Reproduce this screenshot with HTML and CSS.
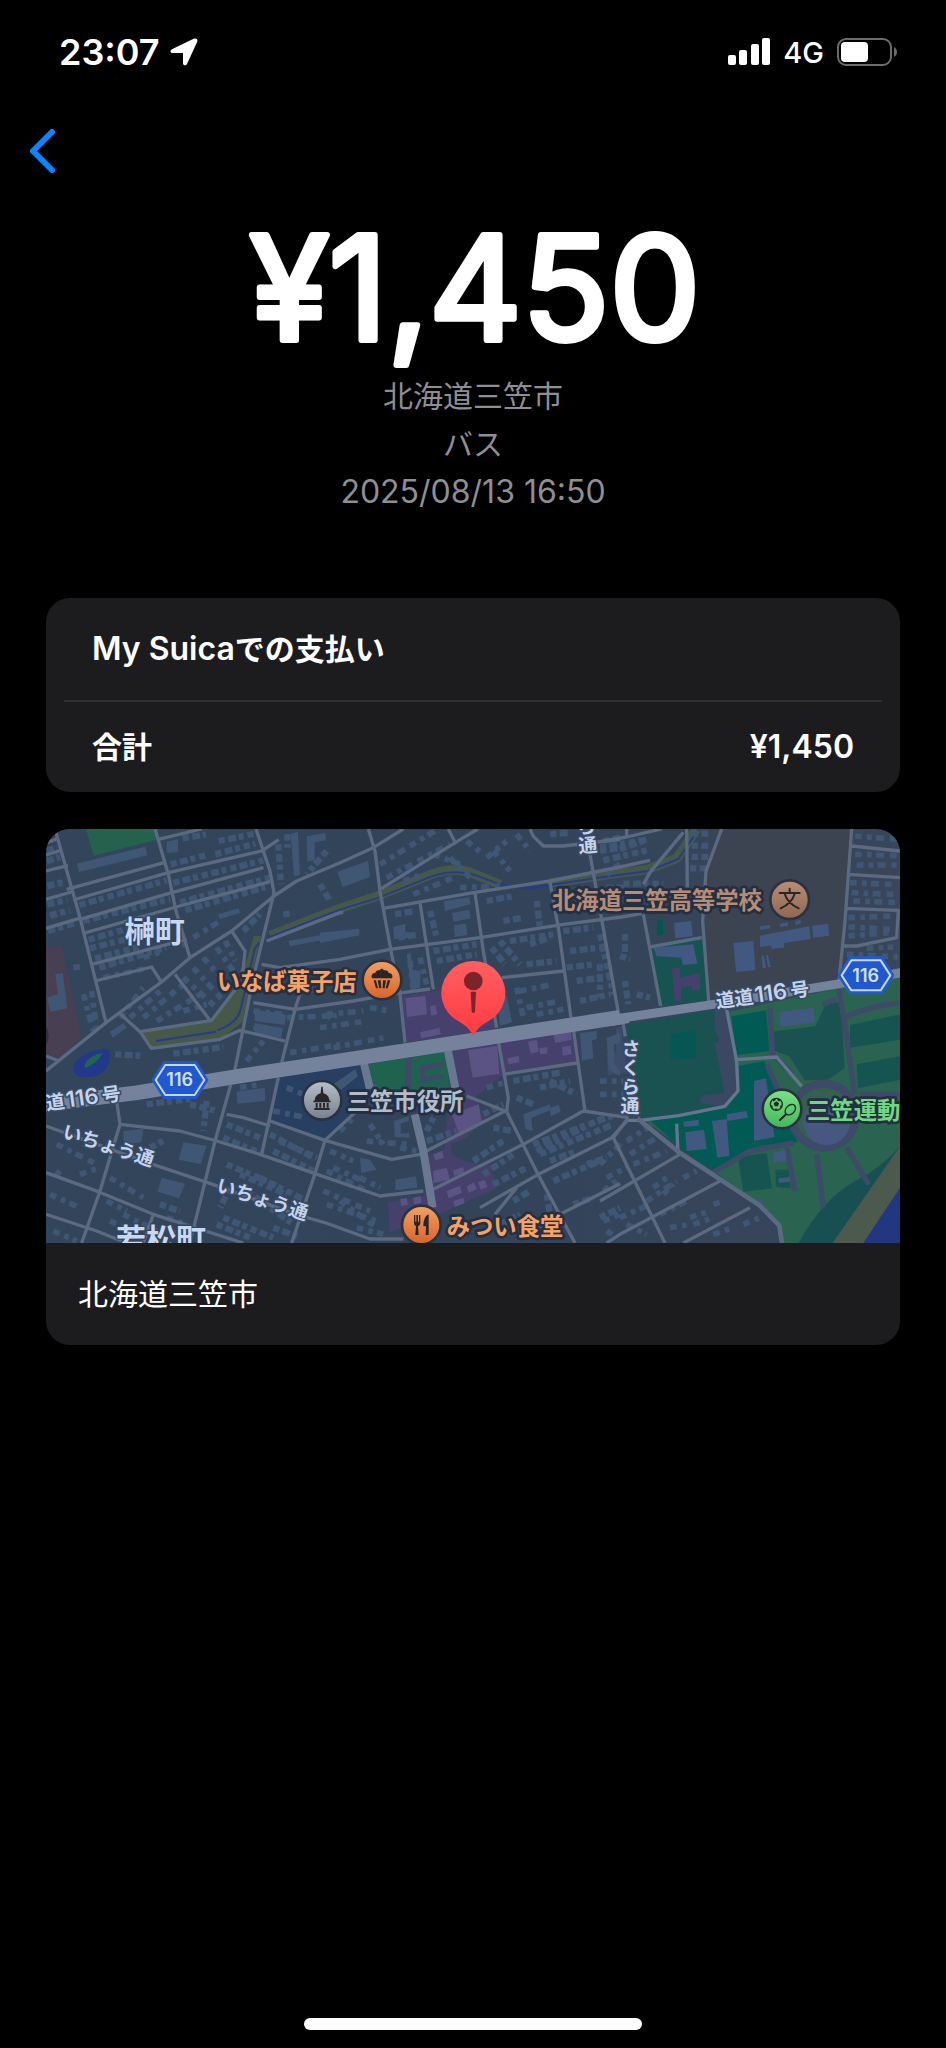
FILE: index.html
```html
<!DOCTYPE html>
<html lang="ja">
  <head>
    <meta charset="UTF-8">
    <meta name="viewport" content="width=device-width, initial-scale=1.0">
    <title>My Suica</title>
    <link rel="stylesheet" href="styles.css">
  </head>
  <body>
    <div class="screen">
        <header class="status-bar">
            <div class="status-left">
                <span class="clock">23:07</span>
                <svg class="icon-location" viewBox="0 0 28 28" aria-hidden="true">
                    <path d="M2 11.2 23.6.8c2.700-1.200 4.600.6 3.500 3.200L17 26c-.9 2.100-4 1.700-4-.8V15H2.900C.2 15-.3 12.300 2 11.200z"/>
                </svg>
            </div>
            <div class="status-right">
                <svg class="icon-signal" viewBox="0 0 42 28" aria-hidden="true">
                    <rect x="0" y="17" width="8" height="10" rx="2"/>
                    <rect x="11" y="12" width="8" height="15" rx="2"/>
                    <rect x="23" y="6" width="8" height="21" rx="2"/>
                    <rect x="34" y="0" width="8" height="27" rx="2"/>
                </svg>
                <span class="network">4G</span>
                <svg class="icon-battery" viewBox="0 0 60 28" aria-hidden="true">
                    <rect class="battery-shell" x="1" y="1" width="53" height="26" rx="8"/>
                    <rect class="battery-level" x="4" y="4" width="27" height="20" rx="4"/>
                    <path class="battery-cap" d="M57 9c4 2 4 8 0 10z"/>
                </svg>
            </div>
        </header>

        <nav class="nav">
            <button class="back-button" type="button" aria-label="戻る">
                <svg viewBox="0 0 26 44" aria-hidden="true">
                    <path d="M22 3 3 22l19 19"/>
                </svg>
            </button>
        </nav>

        <main>
            <section class="summary">
                <h1 class="amount">
                    <svg viewBox="0 0 500 146">
                        <text x="252" y="120">¥1,450</text>
                    </svg>
                </h1>
                <p>北海道三笠市</p>
                <p>バス</p>
                <p class="latin">2025/08/13 16:50</p>
            </section>

            <section class="card payment">
                <h2 class="row"><span class="latin">My Suica</span>での支払い</h2>
                <div class="row total">
                    <span>合計</span>
                    <span class="latin">¥1,450</span>
                </div>
            </section>

            <section class="card place">
                <svg class="map" viewBox="18 24 2562 1242" role="img" aria-label="北海道三笠市の地図">
                    <defs>
                        <linearGradient id="ground">
                            <stop offset="0" stop-color="#32455a"/>
                            <stop offset=".6" stop-color="#33445a"/>
                            <stop offset="1" stop-color="#394559"/>
                        </linearGradient>
                        <linearGradient id="orange" x1="0" y1="0" x2="0" y2="1">
                            <stop offset="0" stop-color="#f2a062"/>
                            <stop offset="1" stop-color="#d9642a"/>
                        </linearGradient>
                        <linearGradient id="gray" x1="0" y1="0" x2="0" y2="1">
                            <stop offset="0" stop-color="#b9bfc8"/>
                            <stop offset="1" stop-color="#75808f"/>
                        </linearGradient>
                        <linearGradient id="brown" x1="0" y1="0" x2="0" y2="1">
                            <stop offset="0" stop-color="#b98e75"/>
                            <stop offset="1" stop-color="#8f6650"/>
                        </linearGradient>
                        <linearGradient id="green" x1="0" y1="0" x2="0" y2="1">
                            <stop offset="0" stop-color="#7be388"/>
                            <stop offset="1" stop-color="#43b659"/>
                        </linearGradient>
                        <linearGradient id="red" x1="0" y1="0" x2="0" y2="1">
                            <stop offset="0" stop-color="#ff5f62"/>
                            <stop offset="1" stop-color="#ff3a40"/>
                        </linearGradient>
                    </defs>

                    <rect fill="url(#ground)" x="18" y="24" width="2562" height="1242"/>

                    <!-- areas, west -->
                    <path fill="#24624e" d="M138 24h205l8 32-190 48z"/>
                    <path fill="#483f52" d="M18 380l48-4 58 270-64 68-42-20z"/>
                    <path fill="#22388a" d="M100 745c0-40 60-62 106-60 12 30-6 74-40 80-34 6-62 8-66-20z"/>
                    <path fill="#21644f" d="M132 738q8-34 58-42-20 30-50 44z"/>
                    <path fill="#465949" d="M300 635l215-36 72-92 32-84 22-78h22l-14 58-42 200-66 52-202 28z"/>
                    <path class="stream" d="M348 660l180-28M532 628q62-22 70-64l42-180 14-20"/>
                    <path fill="#273f61" d="M715 770l130-20 130-20 15 70-80 120-50 35-165-60z"/>
                    <path class="bank" d="M690 344l210-82 115-38 170-68q70-20 120 4l75 30"/>
                    <path class="bank" d="M1530 186l130-18 60-10 100-12 90-34 60-88"/>
                    <path class="stream" d="M684 350l216-84 110-34 165-66q70-22 130-4l75 28 85 12 200-30 160-22 90-36 60-88"/>

                    <!-- areas, centre -->
                    <g transform="translate(840)">
                        <path fill="#45416c" d="M242 526l124-20 40 80 120 16v24L256 664z"/>
                        <path fill="#45416c" d="M396 690l140-24 16 92-86 70 20 50 10 22-60 50-40 20-2 30 40 20 50 10 20-4 30 74-180 80-150 55H208l-4-90 110-20 10-120 50-20z"/>
                        <path fill="#45416c" d="M540 665l216-38 12 94-214 36z"/>
                        <path fill="#1f6250" d="M146 730l230-38 14 112-226 6z"/>
                        <path fill="#3d4967" d="M256 712h20v90h-20zM300 735l70-12v14l-56 10v20l56-6v12l-70 12z"/>
                        <path class="mauve" d="M256 532l60-8 5 56-60 8zM330 556l16-4 6 28-18 4zM300 634l58-14 4 20-58 12zM444 688l88-14 6 84-80 12zM396 880l80-30 10 60-70 26zM624 662l26-6 6 36-24 6zM700 640l52-8 4 24-50 10zM726 678l26-4 2 26-26 4zM562 712l34-8 2 20-32 6zM658 682l24-4v20l-22 2zM340 1050l40-10 10 36-50 10zM400 1048l30-10 2 18-30 8zM380 1110l40-16 6 22-40 16zM440 1096l22-12 8 20-24 12zM474 1084l20-8 8 22-20 8zM400 1140l30-10 4 16-30 12zM240 1135l20-4 4 20-20 4zM280 1130l22-4 2 20-22 4zM340 1000l26-10 6 20-26 8z"/>
                    </g>

                    <!-- areas, east -->
                    <g transform="translate(1680)">
                        <path fill="#3c4351" d="M372 24h380l-36 464-390 52-16-340 8-50z"/>
                        <path fill="#155451" d="M146 380l160-26 18 182-140 20z"/>
                        <path fill="#00594f" d="M172 296h16l2 44-18 6z"/>
                        <path fill="#45416c" d="M216 440h24v30l60-14v50l-24 4v-16l-32 6v40h-20z"/>
                        <path fill="#1a5252" d="M78 612l264-46 46 10 20 140 2 90-36 50-250 40z"/>
                        <path fill="#065653" d="M212 640l76-14v84l-76 6z"/>
                        <path fill="#3a4864" d="M344 566h36l30 140v110l-40 40-70-10 4-20 70-10-30-150 14-4-14-40z"/>
                        <path fill="#2a634f" d="M386 572l514-110v804H548l-10-50-64-68-340-250 250-40 28-50z"/>
                        <path fill="#025a55" d="M394 586l104-18 10 122-98 12zM412 736l80-16 40 70 60 174-110 10-140 76-90-60-100-90 230-40 28-50z"/>
                        <path fill="#1a5252" d="M516 632l130-16 30-64 46-10 12 200-50 34-70 2-46-72-52-20z"/>
                        <path fill="#155451" d="M750 612l150-32v76l-150 24zM770 730l130-24v70l-126 26zM414 1008l86-12 16 106-86 10zM526 1046h40l6 56-44-4z"/>
                        <path fill="#184f53" d="M596 1266q70-130 170-186 80-40 134-104v130l-200 160z"/>
                        <path fill="#4b5a4d" d="M900 976v140l-106 150h-96z"/>
                        <path fill="#22377f" d="M900 1100v166H790z"/>
                        <path class="path-line" d="M510 560l8 140 60 60M668 550l40-14M716 500l26 160 22 160M736 590q70-36 164-44M330 1060l120-70 130-24M560 980l24 130M740 980l66 110M650 1000l20 160M780 820l120 0M500 730l40 90"/>
                        <circle cx="672" cy="884" r="96" fill="#33604f" stroke="#3d4a68" stroke-width="24"/>
                        <circle cx="680" cy="902" r="70" fill="#465782"/>
                        <path class="slate" d="M400 366l60-6 6 88-58 4zM480 344l148-28 4 38-80 12v14l-38 4v-10l-34 4zM636 314l48-6 4 36-48 6zM538 574l104-14 2 44-104 14zM222 306l52-6 4 46-52 6zM160 380l120-10 12 58-44 4-4-22-74-4zM462 780l36-8 16 120 10 56-62 12zM256 934l56-8 8 58-60 6zM250 902l46-6v18l-44 4zM336 900l44-6 8 110-36 6zM380 880l60-10 4 20-62 10zM520 994l36-6 4 32-38 4zM536 1072l34-4v14l-34 4zM484 404h8l6 38h-10zM498 402h6l8 36h-8zM480 316l30-4v10l-30 4zM540 308l24-4v10l-24 4zM586 300l16-4v12l-16 4z"/>
                        <path fill="#3c4d6b" d="M20 700l28-8v-70l16-6 6 60 14 80-60 6z"/>
                    </g>

                    <!-- rows of houses -->
                    <g class="houses">
                        <path d="M20 90l30-10M20 120l40-12M22 195l52-12M22 250l60-14M30 284l60-16M24 330l80-24"/>
                        <path class="d2" d="M118 252l262-74M130 300l260-66M146 356l120-34M150 382l200-50M165 412l130-34M178 440l200-60M400 186l270-68M420 244l270-74M436 268l240-70M392 130l110-28M526 100l120-32M536 60l110-22M428 52l70-12"/>
                        <path class="d3" d="M420 330l20 60M460 350l80-50M310 410l60-20M190 470l120-26M240 590l70-90M270 590l90-80M310 590l120-100M350 600l130-80M430 570l70-20M430 470l110 100M460 440l100 110M490 410l80 90M530 380l50 70M556 360l30 60M130 520l30 110M155 510l14 110M100 440l30-4"/>
                        <path class="d2" d="M715 70l8 120M742 40v40M860 90l-60 70M840 190l30 50M730 280l30-4M610 330l50-50M400 698l150-20M225 700l80 4M320 850l130-16M450 850l80 20M360 1150l60 20M500 840l-10 90"/>
                        <path class="d3" d="M640 570l90 10M640 620l90 14M750 695l150-24M620 720l50-60M770 510l130-10M740 590l150-6M860 590l20-12M600 800l60-10M740 800l50 20M700 870l100 20"/>
                        <path class="d2" d="M270 940l-20 60M330 980l40-20M560 910l100 40M550 950l120 50M690 940l130 70M700 990l120 60M720 960l110 50M560 1030l120 50M600 1060l140 60M570 1100l-30 60M550 1190l150 60M620 1110l140 100M660 1070l140 70M530 1210l100 40M700 1220l80 30"/>
                        <path class="d3" d="M50 970l120 60M60 1050l-20 20M120 1060l60-20M210 1070l100 60M30 1120l90 40M40 1230l70 30M200 1140l60 30M210 1200l90 40M250 1180l100 50M360 1220l80 30M380 1190l60 20"/>
                        <path d="M430 964l70 10-18 56-66-14zM365 1070l70 18-18 44-64-20zM250 930l60-6-6 40-52 6zM590 812l84-12 2 40-84 8zM300 990l40 6-4 28-40-4z" class="block"/>
                        <path d="M114 140l205-50" class="long"/>
                        <path d="M380 62l34-8v40l-34 2zM752 40l22-8 6 130-18 4zM800 46l56-10 2 22-34 6v54l-22 4zM20 530l34-10-8-60 22-4 14 106-50 10zM534 280l62-18 4 14-60 18zM210 632l40-26 10 14-42 30zM746 360l150-28v16l-146 28zM644 566l94 14-4 32-90-12zM644 606l84 16-4 28-80-12z" class="block"/>
                    </g>
                    <g class="houses" transform="translate(840)">
                        <path class="d3" d="M180 130l180-110M200 170l190-100M250 180l60-20M340 100l80 30M390 110l60 60M440 60l50 40M500 110l60-50M520 90l50 60M590 40l40 50M280 220l120-50M420 200l120-5"/>
                        <path class="d2" d="M225 280l60-10M235 350l60-10M330 270l20 80M500 240l80-15M550 300l60-10M570 360l130-20M515 380l40 50M540 360l60 70M630 370l60-20M650 240l10 80M620 430l90-10M340 390l130-20M350 420l120-20M730 330l90-10M750 390l90-10M740 440l80-10M770 480l70-10M780 540l90-20M840 340l40 180M840 90l60-10M690 40l60-4M850 60l50-10"/>
                        <path class="d3" d="M590 500l20 90M620 560l100-20M650 580l80-15M600 510l100-20M300 410l20 80M270 420l10 90M150 560l60 10M40 680l150-30M0 620l140-20M20 580l110-10"/>
                        <path d="M52 152l92-32 6 48-82 30zM372 240l76-12 4 22-78 20zM396 276l52-10 4 26-52 10zM402 312l36-4 4 34-38 6zM220 318l36-10v24l20 4-4 14-50 4zM260 400l12-4 6 50 24 4-2 50-26 4zM530 530l30-6 16 80-36 10zM0 335l118-12v20L0 366zM780 636l50-6v24l-14 4 4 54-34 8zM860 650l40-14v30l-18 4v60l18 20v16l-34-20zM610 880l80-30v18l-56 22 4 40-22-6zM690 860l26-8 6 20-30 14zM222 900l44-14v14l-24 8v30l26-2v14l-44-2zM40 790l66-46 8 22-50 40zM226 1076l62-10 4 34-66 8zM120 1010l30 6 20 30-46 10z" class="block"/>
                        <path class="d2" d="M580 780l140-25M590 830l50 20M660 800l90-20M690 780l80 40M640 970l250-90M660 1000l220-90M650 990l200-100M690 1020l80-30M490 880l60-30M520 920l60 10M320 930l20-40M320 960l90-30M460 1020l90-60M490 1060l90-60M520 1090l100-50M580 1140l50-30M800 1030l60-20M700 1080l140-60M760 1150l60-20M680 1120l10 60M640 1190l50 50M540 1210l60-30M840 1190l60-30"/>
                        <path class="d3" d="M60 930l40-40M140 960l120 10M150 910l40 60M30 990l70 30M40 1040l90 40M20 1050l120 60M120 1070l60 30M10 1110l140 60M20 1150l150 50M60 1140l110 80M110 1220l80 20M240 980l50 10M500 800l50-14M150 790l30 20"/>
                    </g>
                    <g class="houses" transform="translate(1680)">
                        <path class="d2" d="M0 80l140-24M10 118l130-30M60 85l80-30M70 188l120 0M20 200l60 0M0 430v100M20 160l40-30M75 340v60M60 405l30 10M110 520l40 10M75 480l10 70M275 38h50M275 74h50M275 108h50M270 142h50"/>
                        <path class="d3" d="M765 45l130 10M765 100l130 4M770 132h120M750 185l140 6M755 215l140 6M760 240l130 4M745 290l140-5M745 318l140 8M745 345l120-10M740 400l160 8M800 382l80-4"/>
                        <path class="d3" d="M0 780h70M0 820h70M0 1030l70-70M80 960l80-50M90 1000l80-50M100 1030l100-40M20 1070l60-30M10 1110l50-40M60 1190l90-40M80 1210l60 30M140 1140l90-60M190 1120l30-30M180 1180l80-40M160 1100l40-30M250 1070l40-20M10 1200l50-20M20 1230l30 20M340 1150l30-10M270 1190l60-20M280 1210l60-20M340 1240l60-20M430 1210l50-20M210 1220l60-10M470 1140l30 4"/>
                    </g>

                    <!-- minor roads -->
                    <g class="road">
                        <path d="M45 24l75 266 78 315M345 24l40 136 23 110 42 140M648 24l42 126 12 65-62 255-55 275-60 215-60 245-15 61"/>
                        <path d="M18 66l32-12M18 102l45-14M18 150l66-16M18 235l76-22M18 322l100-30M80 205l292-80M100 237l285-82 280-65 51-34M120 295l275-80 275-75M130 337l278-79 282-76M155 430l285-75M165 480l170-42 27 42M355 55l130-31"/>
                        <path d="M18 750l180-145 164-120 88-75 125-80 127-105 68-45 130-55 100-45 90-56"/>
                        <path d="M405 460l105 138M575 330l40 60-5 50-20 60-75 98-215 34-58-52M300 632l34 50 206-27 60-27 135 32M18 705l40 15M680 360l220-85 10 0M665 430l55 10 180-25 150-30 270-35 250-40 175-22 60-10M640 545l125 20 175-25 110-20 120-16M800 455l-35 110-40 160M715 770l-50 230"/>
                        <path d="M230 840l10 70-60 200-55 156M240 910l180 20 110 30 130 40 165 58 195 67 130-15M18 915l320 115 180 60 250 90 90 26 132 48h100M18 1055l157 57 165 68 270 86M340 1180l-30 86M18 1180l152 50 90 36M560 880l50 10 80 25M690 900l165 58 200 57 85-15 255-130M855 958l-30 100-70 208M855 958l95-88"/>
                    </g>
                    <g class="road" transform="translate(840)">
                        <path d="M145 24l20 66 15 120 35 190 25 120 15 145M180 205l250-155 44-26M385 24l20 40M190 262l270-47 230-35 210-42 90-20M300 245l40 260M465 215l25 175 40 230M690 185l25 135 38 270M810 100l18 100 67 375M630 24l10 22 30 29h60l170-20M545 470l185-20"/>
                        <path d="M535 660l30 170-5 42 95 190 110 204M440 825l115 45M340 1105l270-135 180-100 135 20M760 625l35 245M550 760l220-34M480 1160l175-100 220-110 50-55M590 1100l-65 80M720 1180l180-92"/>
                    </g>
                    <g class="road" transform="translate(1680)">
                        <path d="M130 280l52 275M365 24l-47 126-10 150 18 240M260 24l2 175M150 378l155-28M755 24l-20 276-20 200M755 75l145 15M745 160l155 10M738 262l157 6-5 82-120 25h-40M0 62l80-14 105-24M80 24v24M130 190l20-36 100-120M66 590l10 56"/>
                        <path class="bright" d="M380 566l30 154 4 90-40 46-138 28-116 14-40 0M410 716l120-8 75 88M230 908l4 90"/>
                        <path d="M85 890l-45 60 155 316M240 1000L0 1140M360 1080L60 1240l-40 26M450 1160l-200 106"/>
                        <path class="wide" d="M112 892l128 104 240 158 58 60 8 52"/>
                    </g>

                    <!-- main roads -->
                    <g class="main">
                        <path class="side" d="M972 728l18 76M1224 690l22 110M1124 880l26 110 28 170"/>
                        <path class="route" d="M10 850l280-35 310-50 300-46 840-130"/>
                        <path class="route-east" d="M1725 594l295-44 380-62 190-34"/>
                        <path class="route-end" d="M1700 575l20-3 48 12v22l-54 9z"/>
                    </g>

                    <!-- street names -->
                    <g class="street">
                        <text transform="translate(-36 876) rotate(-8)">道道<tspan class="number" dx="4">116</tspan><tspan dx="10">号</tspan></text>
                        <text transform="translate(2030 562) rotate(-8)">道道<tspan class="number" dx="4">116</tspan><tspan dx="10">号</tspan></text>
                        <text transform="translate(64 949) rotate(18)">いちょう通</text>
                        <text transform="translate(526 1110) rotate(18)">いちょう通</text>
                        <text class="vertical" transform="translate(1768 654) rotate(1)">さくら通</text>
                        <text class="vertical" transform="translate(1620 -126) rotate(-5)">さくら通</text>
                    </g>
                    <g class="district">
                        <text x="254" y="364">榊町</text>
                        <text x="228" y="1288">若松町</text>
                    </g>

                    <!-- route shields -->
                    <g class="shield">
                        <path class="shield-edge" d="M372 724h96l33 53-33 53h-96l-33-53z"/>
                        <path class="shield-line" d="M376 732h88l29 45-29 45h-88l-29-45z"/>
                        <text x="419" y="796">116</text>
                    </g>
                    <g class="shield" transform="translate(2058 -314)">
                        <path class="shield-edge" d="M372 724h96l33 53-33 53h-96l-33-53z"/>
                        <path class="shield-line" d="M376 732h88l29 45-29 45h-88l-29-45z"/>
                        <text x="419" y="796">116</text>
                    </g>

                    <!-- points of interest -->
                    <g class="poi">
                        <circle class="ring" cx="-30" cy="645" r="52" fill="#d94a50"/>

                        <text x="530" y="508" fill="#f7a264">いなば菓子店</text>
                        <circle class="ring" cx="1026" cy="477" r="58" fill="url(#orange)"/>
                        <path class="glyph" d="M996 472c-4-10 2-16 10-16 0-7 8-10 14-8 0-6 10-6 11 0 10-1 14 3 15 8 9 0 14 8 10 16zM1001 478h7l6 24h-6zM1013 478h9l2 24h-6zM1029 478h9l-4 24h-6zM1043 478h8l-8 24h-6z"/>

                        <text x="920" y="868" fill="#b3bcc9">三笠市役所</text>
                        <circle class="ring" cx="846" cy="838" r="58" fill="url(#gray)"/>
                        <path class="glyph" d="M844 797h4l2 20c12 3 18 12 18 22h4v5h-52v-5h4c0-10 6-19 18-22zM827 846h6v14h-6zM838 846h6v14h-6zM849 846h6v14h-6zM860 846h6v14h-6zM823 861h46v6h-46z"/>

                        <text x="1536" y="265" fill="#b58c76">北海道三笠高等学校</text>
                        <circle class="ring" cx="2249" cy="236" r="58" fill="url(#brown)"/>
                        <path class="glyph-line" d="M2219 216h60M2249 203v13M2264 218q-8 28-42 44M2234 218q8 28 42 44"/>

                        <text x="2301" y="895" fill="#6fd883">三笠運動公園</text>
                        <circle class="ring" cx="2226" cy="864" r="58" fill="url(#green)"/>
                        <circle class="glyph-thin" cx="2209" cy="850" r="18"/>
                        <path class="glyph" d="M2209 841l8 6-3 9h-10l-3-9zM2198 835l9-4v6l-7 5zM2212 831l9 5-3 6-6-4zM2192 851l6 4-1 8zM2226 851l-6 4 1 8zM2203 863h11l-4 5h-4z"/>
                        <ellipse class="glyph-thin" cx="2251" cy="866" rx="18" ry="13" transform="rotate(-45 2251 866)"/>
                        <path class="glyph-line" d="M2238 880l-18 17"/>

                        <text x="1220" y="1241" fill="#f7a264">みつい食堂</text>
                        <circle class="ring" cx="1144" cy="1212" r="58" fill="url(#orange)"/>
                        <path class="glyph" d="M1122 1182h4v20h3v-20h5v20h3v-20h4v24q0 8-7 10l2 26h-10l2-26q-6-2-6-10zM1166 1180v62h-9l1-26h-8q0-30 16-36z"/>
                    </g>

                    <!-- pin -->
                    <path fill="url(#red)" d="M1300 645c-6-14-18-30-42-43a96 96 0 1 1 84 0c-24 13-36 29-42 43z"/>
                    <circle cx="1300" cy="480" r="28" fill="#7b2429"/>
                    <path fill="#7b2429" d="M1292 512h16l-3 60q-5 8-10 0z"/>
                </svg>
                <p class="place-name">北海道三笠市</p>
            </section>
        </main>

        <div class="home-indicator"></div>
    </div>
  </body>
</html>
```
FILE: styles.css
```css
* {
    box-sizing: border-box;
}

body {
    margin: 0;
    background: #000;
    color: #fff;
    font-family: Inter, "Noto Sans CJK JP", sans-serif;
}

h1, h2, p {
    margin: 0;
    font-weight: 400;
}

.screen {
    min-height: 100vh;
    display: flex;
    flex-direction: column;
}

/* Status bar */
.status-bar {
    display: flex;
    justify-content: space-between;
    align-items: center;
    height: 104px;
    padding: 0 49px 0 59px;
}

.status-left,
.status-right {
    display: flex;
    align-items: center;
}

.status-left {
    gap: 10px;
}

.status-right {
    gap: 13px;
}

.clock {
    font-size: 36px;
    font-weight: 600;
}

.network {
    font-size: 29px;
    font-weight: 500;
}

.icon-location {
    width: 28px;
    height: 28px;
    fill: #fff;
}

.icon-signal {
    width: 42px;
    height: 28px;
    fill: #fff;
}

.icon-battery {
    width: 60px;
    height: 28px;
}

.battery-shell {
    fill: none;
    stroke: #6b6b6b;
    stroke-width: 2;
}

.battery-level {
    fill: #fff;
}

.battery-cap {
    fill: #6b6b6b;
}

/* Navigation */
.nav {
    padding: 25px 27px 23px;
}

.back-button {
    display: block;
    padding: 0 3px;
    border: none;
    background: none;
    cursor: pointer;
}

.back-button svg {
    display: block;
    width: 26px;
    height: 44px;
    fill: none;
    stroke: #0a84ff;
    stroke-width: 6;
    stroke-linecap: round;
    stroke-linejoin: round;
}

/* Payment summary */
.summary {
    margin-top: 24px;
    text-align: center;
    color: #8e8e93;
    font-size: 30px;
    line-height: 48px;
}

.latin {
    font-size: 32px;
}

.amount svg {
    display: block;
    width: 500px;
    max-width: 100%;
    margin: 0 auto 6px;
    overflow: visible;
}

.amount text {
    font-size: 144px;
    font-weight: 400;
    text-anchor: middle;
    fill: #fff;
    stroke: #fff;
    stroke-width: 6;
    stroke-linejoin: round;
}

/* Cards */
.card {
    margin: 0 46px 37px;
    border-radius: 24px;
    background: #1c1c1e;
    overflow: hidden;
    font-size: 30px;
}

.payment {
    margin-top: 82px;
    padding: 0 18px;
}

.row {
    padding: 27px 28px;
    font-size: 30px;
    font-weight: 600;
    line-height: 48px;
}

.total {
    display: flex;
    justify-content: space-between;
    padding: 21px 28px;
    border-top: 2px solid #2f2f31;
}

.place-name {
    padding: 27px 32px;
    line-height: 48px;
}

/* Map */
.map {
    display: block;
    width: 100%;
    height: auto;
}

.bank {
    fill: none;
    stroke: #465949;
    stroke-width: 28;
    stroke-linejoin: round;
}

.stream {
    fill: none;
    stroke: #263c86;
    stroke-width: 6;
    stroke-linejoin: round;
}

.mauve {
    fill: #5b5384;
}

.slate {
    fill: #415981;
}

.houses {
    fill: none;
    stroke: #3f5775;
    stroke-width: 20;
    stroke-dasharray: 22 9 16 12;
}

.houses .d2 {
    stroke-width: 19;
    stroke-dasharray: 19 10 24 8 15 12;
}

.houses .d3 {
    stroke-width: 17;
    stroke-dasharray: 20 16 14 13 24 18;
}

.houses .long {
    stroke-width: 26;
    stroke-dasharray: none;
}

.houses .block {
    fill: #3f5775;
    stroke: none;
}

.path-line {
    fill: none;
    stroke: #3d4a68;
    stroke-width: 16;
    stroke-linejoin: round;
}

.road {
    fill: none;
    stroke: #5b6a80;
    stroke-width: 10;
    stroke-linejoin: round;
}

.road .bright {
    stroke: #66758f;
}

.road .wide {
    stroke-width: 14;
}

.main {
    fill: none;
    stroke: #75829c;
}

.main .side {
    stroke: #697891;
    stroke-width: 24;
}

.main .route {
    stroke-width: 44;
}

.main .route-east {
    stroke-width: 27;
}

.main .route-end {
    fill: #75829c;
    stroke: none;
}

.map text {
    paint-order: stroke;
    stroke-linejoin: round;
}

.street text {
    font-size: 57px;
    font-weight: 600;
    fill: #c5d3ea;
    stroke: #384b66;
    stroke-width: 10;
}

.street .number {
    font-size: 66px;
}

.street .vertical {
    writing-mode: vertical-rl;
}

.district text {
    font-size: 90px;
    font-weight: 600;
    fill: #c8d8f2;
    stroke: #33455d;
    stroke-width: 8;
}

.shield-edge {
    fill: #2059cf;
    stroke: #2059cf;
    stroke-width: 8;
    stroke-linejoin: round;
}

.shield-line {
    fill: none;
    stroke: #c6d8f5;
    stroke-width: 6;
    stroke-linejoin: round;
}

.shield text {
    font-size: 54px;
    font-weight: 600;
    text-anchor: middle;
    fill: #d3e0f6;
}

.poi text {
    font-size: 70px;
    font-weight: 600;
    stroke: #242f42;
    stroke-width: 16;
}

.ring {
    stroke: #2a3242;
    stroke-width: 8;
}

.glyph {
    fill: #2a2526;
}

.glyph-line {
    fill: none;
    stroke: #2a2526;
    stroke-width: 6;
    stroke-linecap: round;
}

.glyph-thin {
    fill: none;
    stroke: #1d3525;
    stroke-width: 4;
}

/* Home indicator */
.home-indicator {
    width: 338px;
    height: 12px;
    margin: auto auto 18px;
    border-radius: 6px;
    background: #fff;
}
```
